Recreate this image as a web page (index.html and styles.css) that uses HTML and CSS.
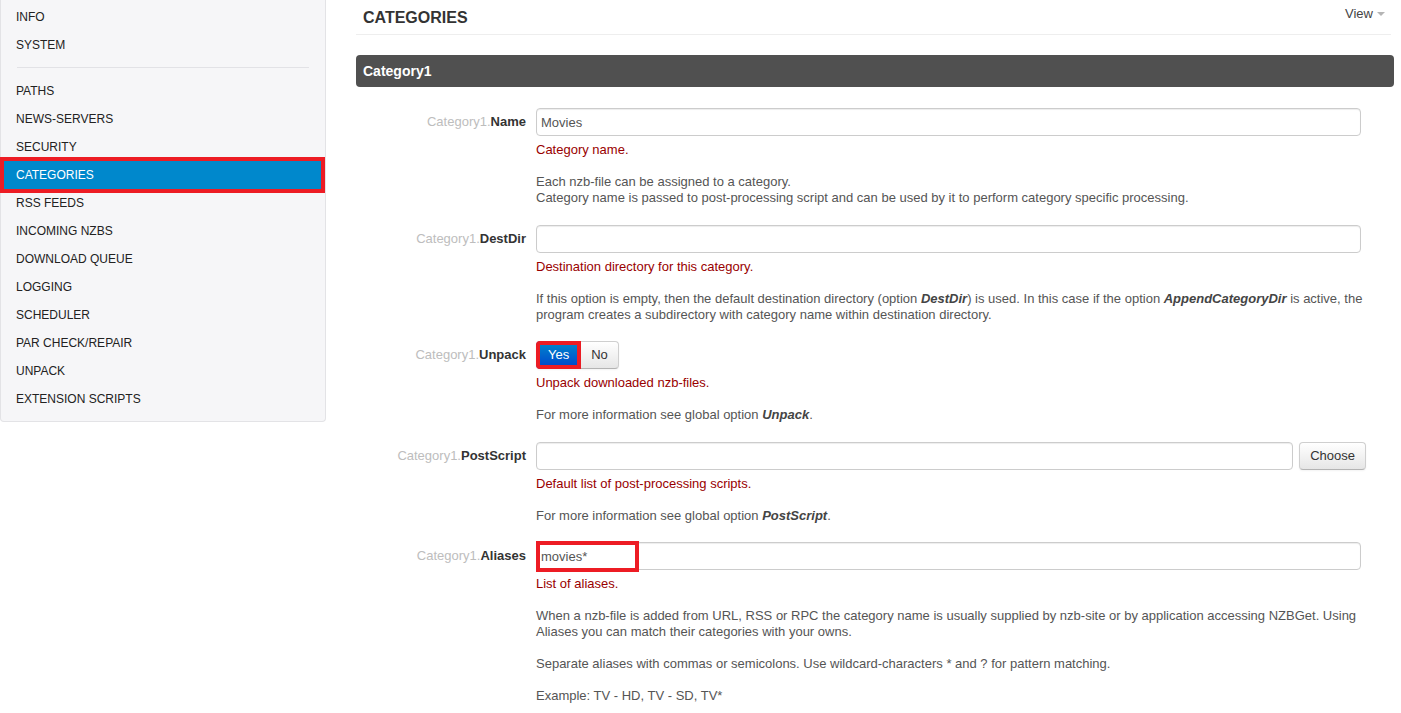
FILE: index.html
```html
<!DOCTYPE html>
<html>
<head>
<meta charset="utf-8">
<title>NZBGet - Categories</title>
<link rel="stylesheet" href="styles.css">
</head>
<body>
<div class="page">
  <nav class="sidebar">
    <a class="nav-item">INFO</a>
    <a class="nav-item">SYSTEM</a>
    <div class="nav-divider"></div>
    <a class="nav-item">PATHS</a>
    <a class="nav-item">NEWS-SERVERS</a>
    <a class="nav-item">SECURITY</a>
    <a class="nav-item active">CATEGORIES</a>
    <a class="nav-item">RSS FEEDS</a>
    <a class="nav-item">INCOMING NZBS</a>
    <a class="nav-item">DOWNLOAD QUEUE</a>
    <a class="nav-item">LOGGING</a>
    <a class="nav-item">SCHEDULER</a>
    <a class="nav-item">PAR CHECK/REPAIR</a>
    <a class="nav-item">UNPACK</a>
    <a class="nav-item">EXTENSION SCRIPTS</a>
  </nav>

  <main class="main">
    <div class="page-head">
      <h3 class="page-title">CATEGORIES</h3>
      <div class="view-menu">View <span class="caret"></span></div>
    </div>

    <div class="section-bar">Category1</div>

    <div class="form">
      <div class="row">
        <label class="row-label"><span class="prefix">Category1.</span><b>Name</b></label>
        <div class="row-body">
          <div class="control"><input class="text-input" type="text" value="Movies"></div>
          <div class="help">
            <p class="desc">Category name.</p>
            <p>Each nzb-file can be assigned to a category.<br>Category name is passed to post-processing script and can be used by it to perform category specific processing.</p>
          </div>
        </div>
      </div>

      <div class="row">
        <label class="row-label"><span class="prefix">Category1.</span><b>DestDir</b></label>
        <div class="row-body">
          <div class="control"><input class="text-input" type="text" value=""></div>
          <div class="help">
            <p class="desc">Destination directory for this category.</p>
            <p>If this option is empty, then the default destination directory (option <b><i>DestDir</i></b>) is used. In this case if the option <b><i>AppendCategoryDir</i></b> is active, the program creates a subdirectory with category name within destination directory.</p>
          </div>
        </div>
      </div>

      <div class="row">
        <label class="row-label"><span class="prefix">Category1.</span><b>Unpack</b></label>
        <div class="row-body">
          <div class="control">
            <div class="btn-group">
              <button class="btn btn-yes marked">Yes</button><button class="btn">No</button>
            </div>
          </div>
          <div class="help">
            <p class="desc">Unpack downloaded nzb-files.</p>
            <p>For more information see global option <b><i>Unpack</i></b>.</p>
          </div>
        </div>
      </div>

      <div class="row">
        <label class="row-label"><span class="prefix">Category1.</span><b>PostScript</b></label>
        <div class="row-body">
          <div class="control control-split"><input class="text-input" type="text" value=""><button class="btn">Choose</button></div>
          <div class="help">
            <p class="desc">Default list of post-processing scripts.</p>
            <p>For more information see global option <b><i>PostScript</i></b>.</p>
          </div>
        </div>
      </div>

      <div class="row">
        <label class="row-label"><span class="prefix">Category1.</span><b>Aliases</b></label>
        <div class="row-body">
          <div class="control control-marked"><input class="text-input" type="text" value="movies*"><span class="mark-box"></span></div>
          <div class="help">
            <p class="desc">List of aliases.</p>
            <p>When a nzb-file is added from URL, RSS or RPC the category name is usually supplied by nzb-site or by application accessing NZBGet. Using Aliases you can match their categories with your owns.</p>
            <p>Separate aliases with commas or semicolons. Use wildcard-characters * and ? for pattern matching.</p>
            <p>Example: TV - HD, TV - SD, TV*</p>
          </div>
        </div>
      </div>
    </div>
  </main>
</div>
</body>
</html>
```

FILE: styles.css
```css
* { box-sizing: border-box; }

html, body {
  margin: 0;
  padding: 0;
  background: #fff;
  font-family: "Liberation Sans", Arial, Helvetica, sans-serif;
  font-size: 13px;
  color: #555;
}

.page {
  display: flex;
  align-items: flex-start;
  gap: 30px;
  width: 1394px;
}

/* ---------- Sidebar ---------- */
.sidebar {
  width: 326px;
  flex: none;
  display: flex;
  flex-direction: column;
  background: #f6f6f8;
  border: 1px solid #e3e3e6;
  border-top: none;
  border-radius: 0 0 4px 4px;
  padding: 3px 3px 8px 3px;
}

.nav-item {
  display: block;
  height: 28px;
  line-height: 28px;
  padding-left: 12px;
  font-size: 12px;
  color: #222;
  text-decoration: none;
}

.nav-item.active {
  background: #0088cc;
  color: #fff;
  margin-right: 1px;
  outline: 4px solid #ed1c24;
}

.nav-divider {
  height: 1px;
  background: #e2e2e6;
  margin: 8px 13px 9px 13px;
}

/* ---------- Main ---------- */
.main {
  width: 1038px;
  flex: none;
}

.page-head {
  display: flex;
  justify-content: space-between;
  align-items: flex-start;
  height: 35px;
  border-bottom: 1px solid #eee;
  margin-right: 3px;
}

.page-title {
  margin: 0;
  padding: 8px 0 0 7px;
  font-size: 16px;
  line-height: 20px;
  font-weight: bold;
  color: #333;
}

.view-menu {
  padding: 6px 6px 0 0;
  font-size: 13px;
  line-height: 16px;
  color: #444;
  display: flex;
  align-items: center;
  gap: 4px;
}

.caret {
  display: inline-block;
  width: 0;
  height: 0;
  border-left: 4px solid transparent;
  border-right: 4px solid transparent;
  border-top: 4px solid #b5b5b5;
  margin-top: -1px;
}

.section-bar {
  margin-top: 20px;
  height: 32px;
  line-height: 32px;
  padding: 0 7px;
  background: #505050;
  color: #fff;
  font-weight: bold;
  font-size: 14px;
  border-radius: 4px;
}

.form {
  padding-top: 21px;
}

.row {
  display: flex;
  gap: 10px;
  margin-bottom: 18.5px;
}

.row-label {
  width: 170px;
  flex: none;
  text-align: right;
  padding-top: 5px;
  line-height: 18px;
  font-size: 13px;
  color: #333;
}

.row-label .prefix {
  color: #bdbdbd;
}

.row-label b {
  color: #333;
}

.row-body {
  width: 830px;
  flex: none;
}

.control {
  height: 28px;
}

.control-split {
  display: flex;
  gap: 6px;
}

.control-marked {
  position: relative;
}

.text-input {
  display: block;
  width: 825px;
  height: 28px;
  margin: 0;
  padding: 4px 4px;
  font-family: "Liberation Sans", Arial, Helvetica, sans-serif;
  font-size: 13px;
  color: #555;
  border: 1px solid #cccccc;
  border-radius: 4px;
  background: #fff;
  box-shadow: inset 0 1px 1px rgba(0, 0, 0, 0.075);
  outline: none;
}

.control-split .text-input {
  width: auto;
  flex: 1;
}

.mark-box {
  position: absolute;
  left: 0;
  top: -1px;
  width: 103px;
  height: 31px;
  border: 4px solid #ed1c24;
  pointer-events: none;
}

.btn {
  display: inline-block;
  height: 28px;
  margin: 0;
  padding: 4px 10px;
  font-family: "Liberation Sans", Arial, Helvetica, sans-serif;
  font-size: 13px;
  line-height: 18px;
  color: #333;
  background: linear-gradient(to bottom, #ffffff, #e6e6e6);
  border: 1px solid #cfcfcf;
  border-bottom-color: #b3b3b3;
  border-radius: 4px;
  box-shadow: inset 0 1px 0 rgba(255, 255, 255, 0.2), 0 1px 2px rgba(0, 0, 0, 0.05);
  cursor: pointer;
}

.btn-group {
  display: inline-flex;
}

.btn-group .btn:first-child {
  border-radius: 4px 0 0 4px;
}

.btn-group .btn:last-child {
  border-radius: 0 4px 4px 0;
  border-left: none;
}

.btn-yes {
  color: #fff;
  background: linear-gradient(to bottom, #0088cc, #0044cc);
  border-color: #0044cc;
  padding: 4px 11px;
}

.marked {
  outline: 4px solid #ed1c24;
  outline-offset: -4px;
}

.help {
  margin-top: 6px;
  font-size: 13px;
  line-height: 16px;
  color: #555;
}

.help p {
  margin: 16px 0 0 0;
}

.help p:first-child {
  margin-top: 0;
}

.help .desc {
  color: #990000;
}

.help b {
  color: #444;
}
```
